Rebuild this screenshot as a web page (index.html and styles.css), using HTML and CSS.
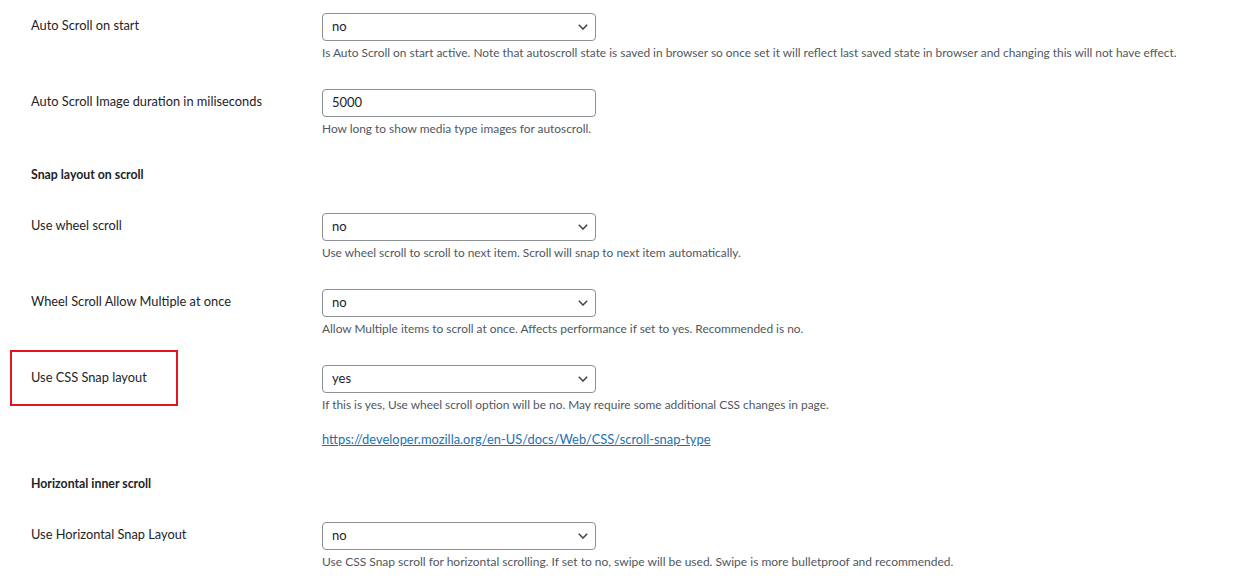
FILE: index.html
```html
<!DOCTYPE html>
<html lang="en">
<head>
<meta charset="utf-8">
<title>Settings</title>
<link rel="stylesheet" href="styles.css">
</head>
<body>
<div class="form">
  <div class="row">
    <div class="label">Auto Scroll on start</div>
    <div class="field">
      <div class="select"><span>no</span><svg class="chev" viewBox="0 0 10 6" width="10" height="6"><path d="M0.8 0.8 L5 5 L9.2 0.8" fill="none" stroke="#3c434a" stroke-width="1.5"/></svg></div>
      <p class="desc">Is Auto Scroll on start active. Note that autoscroll state is saved in browser so once set it will reflect last saved state in browser and changing this will not have effect.</p>
    </div>
  </div>
  <div class="row">
    <div class="label">Auto Scroll Image duration in miliseconds</div>
    <div class="field">
      <div class="select input"><span>5000</span></div>
      <p class="desc">How long to show media type images for autoscroll.</p>
    </div>
  </div>
  <h3 class="heading">Snap layout on scroll</h3>
  <div class="row">
    <div class="label">Use wheel scroll</div>
    <div class="field">
      <div class="select"><span>no</span><svg class="chev" viewBox="0 0 10 6" width="10" height="6"><path d="M0.8 0.8 L5 5 L9.2 0.8" fill="none" stroke="#3c434a" stroke-width="1.5"/></svg></div>
      <p class="desc">Use wheel scroll to scroll to next item. Scroll will snap to next item automatically.</p>
    </div>
  </div>
  <div class="row">
    <div class="label">Wheel Scroll Allow Multiple at once</div>
    <div class="field">
      <div class="select"><span>no</span><svg class="chev" viewBox="0 0 10 6" width="10" height="6"><path d="M0.8 0.8 L5 5 L9.2 0.8" fill="none" stroke="#3c434a" stroke-width="1.5"/></svg></div>
      <p class="desc">Allow Multiple items to scroll at once. Affects performance if set to yes. Recommended is no.</p>
    </div>
  </div>
  <div class="row">
    <div class="label marked">Use CSS Snap layout<span class="mark"></span></div>
    <div class="field">
      <div class="select"><span>yes</span><svg class="chev" viewBox="0 0 10 6" width="10" height="6"><path d="M0.8 0.8 L5 5 L9.2 0.8" fill="none" stroke="#3c434a" stroke-width="1.5"/></svg></div>
      <p class="desc">If this is yes, Use wheel scroll option will be no. May require some additional CSS changes in page.</p>
      <p class="link-line"><a href="#">https://developer.mozilla.org/en-US/docs/Web/CSS/scroll-snap-type</a></p>
    </div>
  </div>
  <h3 class="heading second">Horizontal inner scroll</h3>
  <div class="row">
    <div class="label">Use Horizontal Snap Layout</div>
    <div class="field">
      <div class="select"><span>no</span><svg class="chev" viewBox="0 0 10 6" width="10" height="6"><path d="M0.8 0.8 L5 5 L9.2 0.8" fill="none" stroke="#3c434a" stroke-width="1.5"/></svg></div>
      <p class="desc narrow">Use CSS Snap scroll for horizontal scrolling. If set to no, swipe will be used. Swipe is more bulletproof and recommended.</p>
    </div>
  </div>
</div>
</body>
</html>
```
FILE: styles.css
```css
html, body {
  margin: 0;
  padding: 0;
  background: #ffffff;
}
body {
  font-family: Lato, "Noto Sans", sans-serif;
  color: #1d2327;
  font-size: 12.8px;
  line-height: 18px;
}
.form {
  padding-left: 31px;
}
.row {
  display: grid;
  grid-template-columns: 291px 1fr;
  padding: 13px 0 14px;
}
.label {
  padding-top: 3px;
  line-height: 18px;
  position: relative;
  color: #1d2327;
}
.mark {
  position: absolute;
  left: -21px;
  top: -15px;
  width: 164px;
  height: 52px;
  border: 2px solid #e5141f;
}
.field {
  display: flex;
  flex-direction: column;
  align-items: flex-start;
}
.select {
  box-sizing: border-box;
  width: 274px;
  height: 28px;
  border: 1px solid #8c8f94;
  border-radius: 4px;
  display: flex;
  align-items: center;
  justify-content: space-between;
  padding: 0 7px 2px 9px;
  color: #1d2327;
  font-size: 13px;
}
.chev {
  display: block;
  margin-top: 2px;
}
.desc {
  margin: 3px 0 0;
  color: #50575e;
  font-size: 11.9px;
  line-height: 18px;
  white-space: nowrap;
}
.desc.narrow {
  font-size: 12px;
}
.link-line {
  margin: 16px 0 0;
  font-size: 12.9px;
  line-height: 18px;
}
.link-line a {
  color: #2271b1;
  text-decoration: underline;
}
.heading {
  margin: 0;
  padding: 14px 0 16px;
  font-size: 12.3px;
  font-weight: 700;
  line-height: 18px;
  color: #1d2327;
}
.heading.second {
  padding-top: 13px;
}
```
